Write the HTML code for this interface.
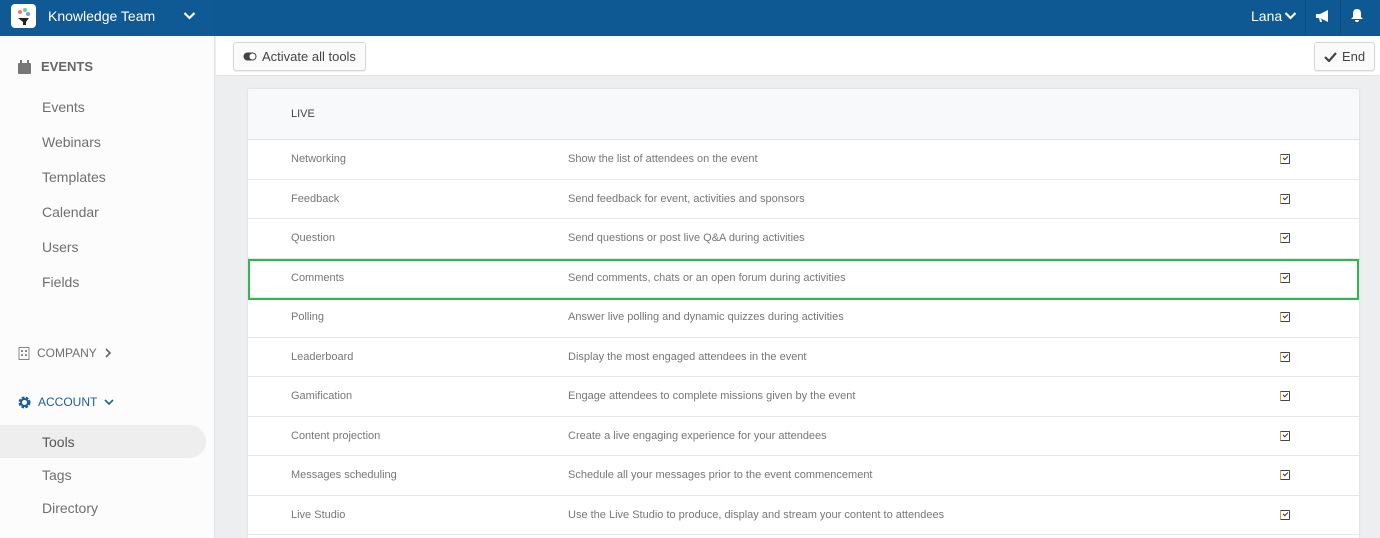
<!DOCTYPE html>
<html style="overflow:hidden;width:1380px;height:538px"><head><meta charset="utf-8"><style>
*{box-sizing:border-box;margin:0;padding:0}
body{width:1380px;height:538px;overflow:hidden;font-family:"Liberation Sans",sans-serif;background:#eceeef;position:relative;color:#6b6b6b}
.hdr{position:absolute;left:0;top:0;width:1380px;height:36px;background:#0e5893}
.hdr .l{position:absolute;left:0;top:0;width:215px;height:36px;background:#0f5a94}
.logo{position:absolute;left:11px;top:4px;width:25px;height:24px;background:#fff;border-radius:4px}
.hdr .t{position:absolute;left:48px;top:8px;color:#fff;font-size:14px}
.side{position:absolute;left:0;top:36px;width:215px;height:502px;background:#fcfcfc;border-right:1px solid #e4e4e4}
.si{position:absolute;left:42px;font-size:14px;color:#6f6f6f}
.sec{position:absolute;left:18px;font-size:12px;color:#6f6f6f;display:flex;align-items:center;gap:7px}
.top{position:absolute;left:216px;top:36px;width:1164px;height:40px;background:#fff;border-bottom:1px solid #e4e4e4}
.btn{position:absolute;top:6px;height:29px;border:1px solid #d8d8d8;border-radius:3px;background:#fafafa;font-size:13px;color:#444;display:flex;align-items:center;padding:0 9px;gap:5px;box-shadow:0 1px 1px rgba(0,0,0,.08)}
.card{position:absolute;left:248px;top:89px;width:1111px;height:449px;overflow:hidden;background:#fff;box-shadow:0 0 2px rgba(0,0,0,.12)}
.lh{height:51px;background:#f8f9fa;border-bottom:1px solid #e2e2e2;font-size:11px;color:#444;padding:19px 0 0 43px}
.row{height:39.5px;border-bottom:1px solid #e6e6e6;position:relative;font-size:11px;color:#777}
.row span{position:absolute;top:13px}
.row .a{left:43px}.row .b{left:320px}
.cb{position:absolute;left:1032px;top:14px;width:10px;height:10px;border:1px solid #444;border-left-color:#c9a43c;border-radius:1px}
.cb:after{content:"";position:absolute;left:2px;top:1px;width:4px;height:2px;border-left:1px solid #333;border-bottom:1px solid #333;transform:rotate(-45deg)}
.grn{position:absolute;left:248px;top:259px;width:1111px;height:41px;border:2px solid #2db94d}
</style></head><body>
<div class="hdr"><div class="l"></div>
<div class="logo"><svg width="25" height="24"><circle cx="9" cy="8" r="2" fill="#e77"/><circle cx="14" cy="6" r="2" fill="#7c7"/><circle cx="17" cy="10" r="2" fill="#79e"/><path d="M7 14h11l-3 4v3h-3v-3z" fill="#222"/></svg></div>
<div class="t">Knowledge Team</div>
<svg style="position:absolute;left:183px;top:11px" width="13" height="10"><path d="M1.5 2l5 5 5-5" stroke="#fff" stroke-width="2.2" fill="none"/></svg>
<div style="position:absolute;left:1251px;top:8px;color:#fff;font-size:14px">Lana</div>
<svg style="position:absolute;left:1284px;top:11px" width="13" height="10"><path d="M1.5 2l5 5 5-5" stroke="#fff" stroke-width="2.2" fill="none"/></svg>
<div style="position:absolute;left:1305px;top:0;width:1px;height:36px;background:#0b4d80"></div>
<div style="position:absolute;left:1340px;top:0;width:1px;height:36px;background:#0b4d80"></div>
<svg style="position:absolute;left:1315px;top:9px" width="16" height="14"><path d="M1 5h4l8-4v12l-8-4H1z M4 9l1 4h2l-1-4" fill="#fff"/></svg>
<svg style="position:absolute;left:1350px;top:8px" width="14" height="15"><path d="M7 1c-3 0-4 2-4 5v3l-2 2h12l-2-2V6c0-3-1-5-4-5zM5 12a2 2 0 0 0 4 0z" fill="#fff"/></svg>
</div>
<div class="side">
<div class="sec" style="top:23px;font-size:13px"><svg width="13" height="14"><rect x="0" y="3" width="13" height="11" rx="1" fill="#777"/><rect x="2" y="0" width="2" height="4" fill="#777"/><rect x="9" y="0" width="2" height="4" fill="#777"/></svg><span style="margin-left:3px;color:#666;font-weight:bold">EVENTS</span></div>
<div class="si" style="top:63px">Events</div>
<div class="si" style="top:98px">Webinars</div>
<div class="si" style="top:133px">Templates</div>
<div class="si" style="top:168px">Calendar</div>
<div class="si" style="top:203px">Users</div>
<div class="si" style="top:238px">Fields</div>
<div class="sec" style="top:310px"><svg width="12" height="13"><rect x="1" y="0.5" width="10" height="12" fill="none" stroke="#888"/><rect x="3" y="3" width="2" height="2" fill="#888"/><rect x="7" y="3" width="2" height="2" fill="#888"/><rect x="3" y="7" width="2" height="2" fill="#888"/><rect x="7" y="7" width="2" height="2" fill="#888"/></svg>COMPANY <svg width="8" height="10"><path d="M2 1l4 4-4 4" stroke="#666" stroke-width="1.6" fill="none"/></svg></div>
<div class="sec" style="top:359px;color:#1d5f91"><svg width="13" height="13" viewBox="0 0 13 13"><circle cx="6.5" cy="6.5" r="4.5" fill="none" stroke="#1d5f91" stroke-width="3" stroke-dasharray="2.5 1.2"/><circle cx="6.5" cy="6.5" r="3.5" fill="none" stroke="#1d5f91" stroke-width="2"/></svg>ACCOUNT <svg width="10" height="8"><path d="M1 2l4 4 4-4" stroke="#1d5f91" stroke-width="1.6" fill="none"/></svg></div>
<div style="position:absolute;left:0;top:389px;width:206px;height:33px;background:#eeeeee;border-radius:0 17px 17px 0"></div>
<div class="si" style="top:398px;color:#555">Tools</div>
<div class="si" style="top:431px">Tags</div>
<div class="si" style="top:464px">Directory</div>
</div>
<div class="top">
<div class="btn" style="left:17px"><svg width="14" height="9"><rect x="0.5" y="0.5" width="13" height="8" rx="4" fill="#444"/><circle cx="9.5" cy="4.5" r="3" fill="#fff"/></svg>Activate all tools</div>
<div class="btn" style="left:1098px"><svg width="13" height="10"><path d="M1 5l4 4 7-8" stroke="#444" stroke-width="2.2" fill="none"/></svg>End</div>
</div>
<div class="card">
<div class="lh">LIVE</div>
<div class="row"><span class="a">Networking</span><span class="b">Show the list of attendees on the event</span><i class="cb"></i></div>
<div class="row"><span class="a">Feedback</span><span class="b">Send feedback for event, activities and sponsors</span><i class="cb"></i></div>
<div class="row"><span class="a">Question</span><span class="b">Send questions or post live Q&amp;A during activities</span><i class="cb"></i></div>
<div class="row"><span class="a">Comments</span><span class="b">Send comments, chats or an open forum during activities</span><i class="cb"></i></div>
<div class="row"><span class="a">Polling</span><span class="b">Answer live polling and dynamic quizzes during activities</span><i class="cb"></i></div>
<div class="row"><span class="a">Leaderboard</span><span class="b">Display the most engaged attendees in the event</span><i class="cb"></i></div>
<div class="row"><span class="a">Gamification</span><span class="b">Engage attendees to complete missions given by the event</span><i class="cb"></i></div>
<div class="row"><span class="a">Content projection</span><span class="b">Create a live engaging experience for your attendees</span><i class="cb"></i></div>
<div class="row"><span class="a">Messages scheduling</span><span class="b">Schedule all your messages prior to the event commencement</span><i class="cb"></i></div>
<div class="row"><span class="a">Live Studio</span><span class="b">Use the Live Studio to produce, display and stream your content to attendees</span><i class="cb"></i></div>
</div>
<div class="grn"></div>
</body></html>
